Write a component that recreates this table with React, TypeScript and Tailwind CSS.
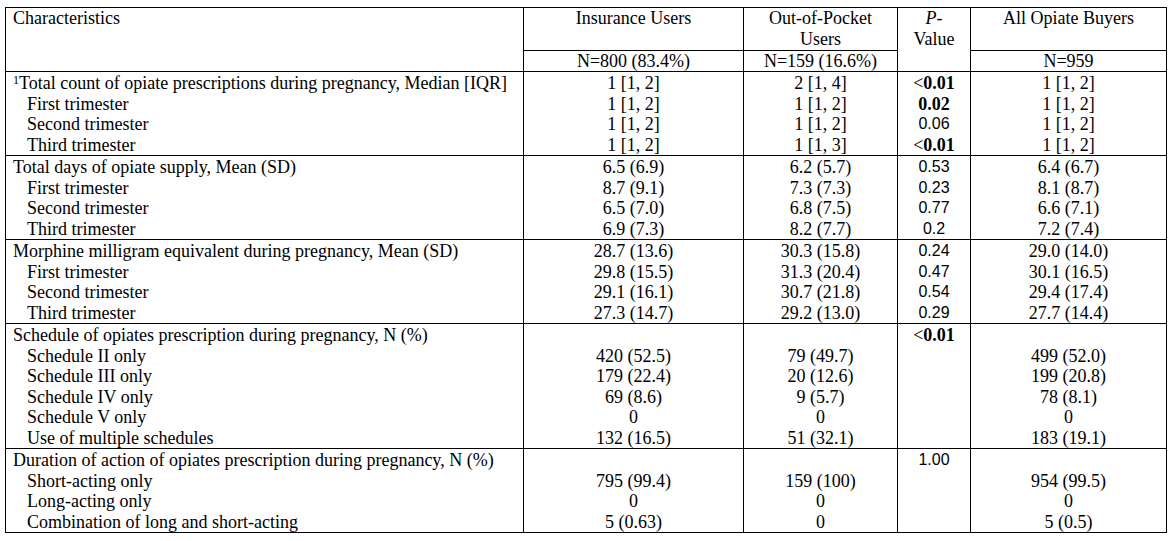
import React from "react";

type Group = {
  title: React.ReactNode;
  items: string[];
  ins: string[];
  oop: string[];
  p: { v: string; b?: boolean }[];
  all: string[];
};

const groups: Group[] = [
  {
    title: (
      <>
        <span className="text-[12px] leading-[12px] align-top relative top-[1px]">1</span>Total count of opiate prescriptions during pregnancy, Median [IQR]
      </>
    ),
    items: ["First trimester", "Second trimester", "Third trimester"],
    ins: ["1 [1, 2]", "1 [1, 2]", "1 [1, 2]", "1 [1, 2]"],
    oop: ["2 [1, 4]", "1 [1, 2]", "1 [1, 2]", "1 [1, 3]"],
    p: [{ v: "<0.01", b: true }, { v: "0.02", b: true }, { v: "0.06" }, { v: "<0.01", b: true }],
    all: ["1 [1, 2]", "1 [1, 2]", "1 [1, 2]", "1 [1, 2]"],
  },
  {
    title: "Total days of opiate supply, Mean (SD)",
    items: ["First trimester", "Second trimester", "Third trimester"],
    ins: ["6.5 (6.9)", "8.7 (9.1)", "6.5 (7.0)", "6.9 (7.3)"],
    oop: ["6.2 (5.7)", "7.3 (7.3)", "6.8 (7.5)", "8.2 (7.7)"],
    p: [{ v: "0.53" }, { v: "0.23" }, { v: "0.77" }, { v: "0.2" }],
    all: ["6.4 (6.7)", "8.1 (8.7)", "6.6 (7.1)", "7.2 (7.4)"],
  },
  {
    title: "Morphine milligram equivalent during pregnancy, Mean (SD)",
    items: ["First trimester", "Second trimester", "Third trimester"],
    ins: ["28.7 (13.6)", "29.8 (15.5)", "29.1 (16.1)", "27.3 (14.7)"],
    oop: ["30.3 (15.8)", "31.3 (20.4)", "30.7 (21.8)", "29.2 (13.0)"],
    p: [{ v: "0.24" }, { v: "0.47" }, { v: "0.54" }, { v: "0.29" }],
    all: ["29.0 (14.0)", "30.1 (16.5)", "29.4 (17.4)", "27.7 (14.4)"],
  },
  {
    title: "Schedule of opiates prescription during pregnancy, N (%)",
    items: [
      "Schedule II only",
      "Schedule III only",
      "Schedule IV only",
      "Schedule V only",
      "Use of multiple schedules",
    ],
    ins: ["", "420 (52.5)", "179 (22.4)", "69 (8.6)", "0", "132 (16.5)"],
    oop: ["", "79 (49.7)", "20 (12.6)", "9 (5.7)", "0", "51 (32.1)"],
    p: [{ v: "<0.01", b: true }],
    all: ["", "499 (52.0)", "199 (20.8)", "78 (8.1)", "0", "183 (19.1)"],
  },
  {
    title: "Duration of action of opiates prescription during pregnancy, N (%)",
    items: ["Short-acting only", "Long-acting only", "Combination of long and short-acting"],
    ins: ["", "795 (99.4)", "0", "5 (0.63)"],
    oop: ["", "159 (100)", "0", "0"],
    p: [{ v: "1.00" }],
    all: ["", "954 (99.5)", "0", "5 (0.5)"],
  },
];

const Lines = ({ vals }: { vals: string[] }) => (
  <>
    {vals.map((v, i) => (
      <div key={i} className="h-[20.5px] leading-[20.5px] whitespace-nowrap">
        {v || "\u00a0"}
      </div>
    ))}
  </>
);

function PVal({ v, b }: { v: string; b?: boolean }) {
  if (b) {
    const lt = v.startsWith("<");
    return (
      <div className="h-[20.5px] leading-[20.5px] whitespace-nowrap">
        {lt && <span>&lt;</span>}
        <span className="font-bold">{lt ? v.slice(1) : v}</span>
      </div>
    );
  }
  return (
    <div
      className="h-[20.5px] leading-[20.5px] whitespace-nowrap text-[16px]"
      style={{ fontFamily: '"Liberation Sans", Arial, sans-serif' }}
    >
      {v}
    </div>
  );
}

const cell = "border border-black text-[18px] leading-[20.5px]";

export default function App() {
  return (
    <div
      className="bg-white w-[1174px] h-[541px] pt-[7px] pl-[5px] text-black text-[18px]"
      style={{ fontFamily: '"Liberation Serif", "Times New Roman", serif' }}
    >
      <table
        className="table-fixed border-collapse w-[1161px] border border-black text-[18px]"
        style={{ fontFamily: '"Liberation Serif", "Times New Roman", serif' }}
      >
        <colgroup>
          <col className="w-[518px]" />
          <col className="w-[220px]" />
          <col className="w-[154px]" />
          <col className="w-[73px]" />
          <col className="w-[196px]" />
        </colgroup>
        <thead>
          <tr>
            <th rowSpan={2} className={`${cell} font-normal text-left align-top pl-[7px]`}>
              Characteristics
            </th>
            <th className={`${cell} font-normal align-top h-[43px]`}>Insurance Users</th>
            <th className={`${cell} font-normal align-top`}>
              Out-of-Pocket
              <br />
              Users
            </th>
            <th rowSpan={2} className={`${cell} font-normal align-top`}>
              <i>P</i>-<br />
              Value
            </th>
            <th className={`${cell} font-normal align-top`}>All Opiate Buyers</th>
          </tr>
          <tr>
            <th className={`${cell} font-normal !leading-[20px] h-[21px]`}>N=800 (83.4%)</th>
            <th className={`${cell} font-normal !leading-[20px]`}>N=159 (16.6%)</th>
            <th className={`${cell} font-normal !leading-[20px]`}>N=959</th>
          </tr>
        </thead>
        <tbody>
          {groups.map((g, gi) => (
            <tr key={gi}>
              <td className={`${cell} align-top pl-[7px] pt-[1px]`}>
                <div className="h-[20.5px] leading-[20.5px] whitespace-nowrap">{g.title}</div>
                {g.items.map((it, i) => (
                  <div key={i} className="h-[20.5px] leading-[20.5px] whitespace-nowrap pl-[14px]">
                    {it}
                  </div>
                ))}
              </td>
              <td className={`${cell} align-top text-center pt-[1px]`}>
                <Lines vals={g.ins} />
              </td>
              <td className={`${cell} align-top text-center pt-[1px]`}>
                <Lines vals={g.oop} />
              </td>
              <td className={`${cell} align-top text-center pt-[1px]`}>
                {g.p.map((p, i) => (
                  <PVal key={i} v={p.v} b={p.b} />
                ))}
              </td>
              <td className={`${cell} align-top text-center pt-[1px]`}>
                <Lines vals={g.all} />
              </td>
            </tr>
          ))}
        </tbody>
      </table>
    </div>
  );
}
